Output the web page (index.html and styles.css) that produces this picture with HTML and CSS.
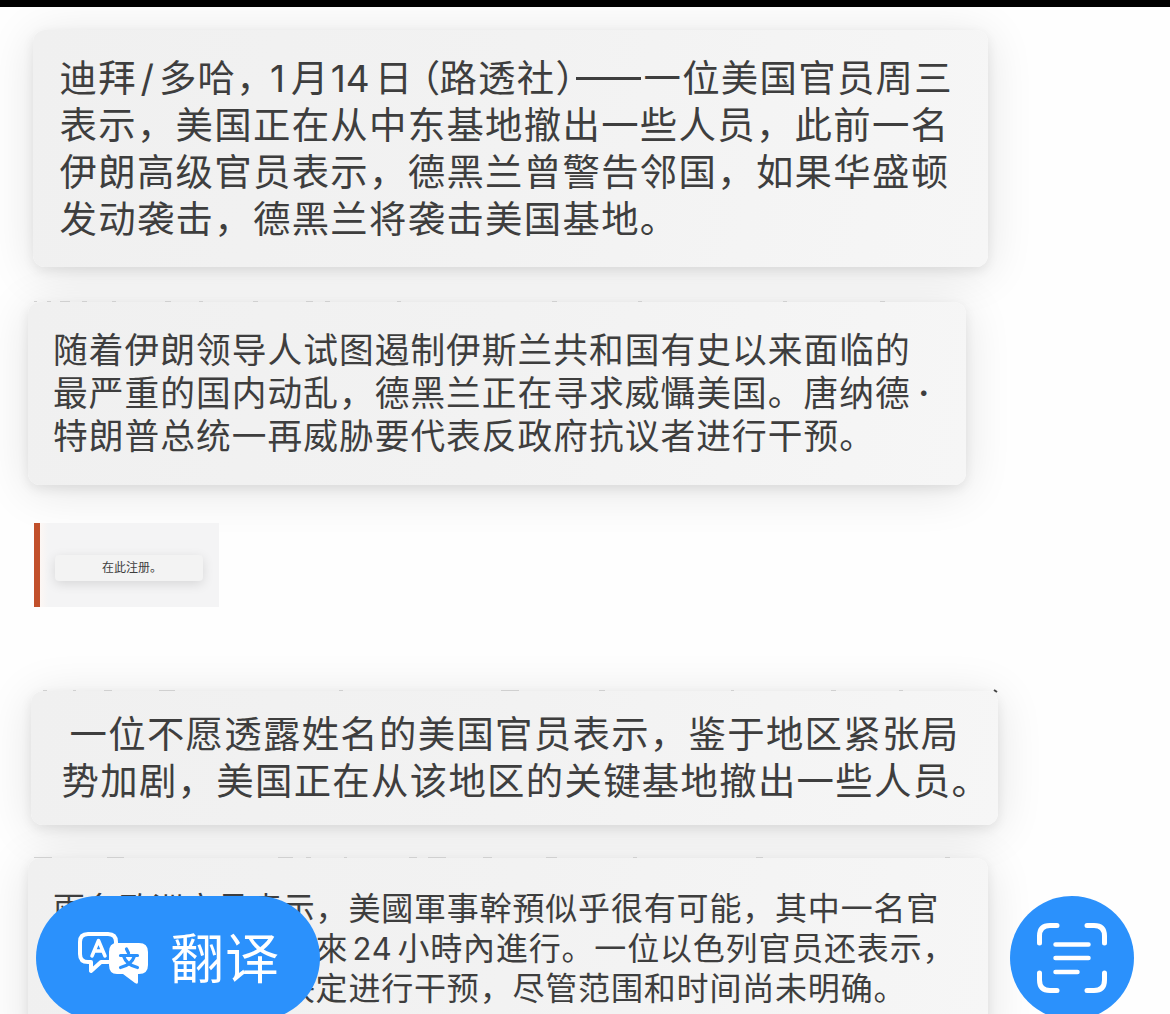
FILE: index.html
```html
<!doctype html>
<html lang="zh-CN">

<head>
  <meta charset="UTF-8">
  <title>翻译</title>
  <link rel="stylesheet" href="styles.css">
</head>

<body>
  <div class="status"></div>
  <main class="page">
    <p class="card c1">
      <span>迪拜<i class="slash">/</i>多哈，<i class="num one">1</i>月<i class="num">14</i>日<i class="open">（</i>路透社<i class="close">）</i><i class="dash"></i>一位美国官员周三</span>
      <span>表示，美国正在从中东基地撤出一些人员，此前一名</span>
      <span>伊朗高级官员表示，德黑兰曾警告邻国，如果华盛顿</span>
      <span>发动袭击，德黑兰将袭击美国基地。</span>
    </p>

    <p class="card c2">
      <svg class="traces" viewBox="0 0 967 3"><path d="M6 1.500h3M19 1.500h4M32 1.500h10M54 1.500h5M84 1.500h4M137 1.500h6M171 1.500h4M225 1.500h5M278 1.500h7M297 1.500h5M369 1.500h4M524 1.500h5M610 1.500h4M755 1.500h4M852 1.500h5" /></svg>
      <span>随着伊朗领导人试图遏制伊斯兰共和国有史以来面临的</span>
      <span>最严重的国内动乱，德黑兰正在寻求威懾美国。唐纳德<i class="dot">·</i></span>
      <span>特朗普总统一再威胁要代表反政府抗议者进行干预。</span>
    </p>

    <div class="quote">
      <p class="note">在此注册。</p>
    </div>

    <p class="card c3">
      <svg class="traces" viewBox="0 0 967 3"><path d="M12 1.500h4M42 1.500h3M73 1.500h8M128 1.500h16M308 1.500h4M470 1.500h18M568 1.500h6M700 1.500h3M800 1.500h5M868 1.500h4" /><path class="mark" d="M963 1l3 2" /></svg>
      <span class="first">一位不愿透露姓名的美国官员表示，鉴于地区紧张局</span>
      <span>势加剧，美国正在从该地区的关键基地撤出一些人员。</span>
    </p>

    <p class="card c4">
      <svg class="traces" viewBox="0 0 967 3"><path d="M6 1.500h18M79 1.500h17M250 1.500h15M278 1.500h5M316 1.500h3M381 1.500h8M400 1.500h18M455 1.500h9M518 1.500h11M605 1.500h4M728 1.500h7M917 1.500h5" /></svg>
      <span>兩名歐洲官員表示，美國軍事幹預似乎很有可能，其中一名官</span>
      <span>員表示，可能在未來<i class="hours">24</i>小時內進行。一位以色列官员还表示，</span>
      <span>特朗普似乎已经决定进行干预，尽管范围和时间尚未明确。</span>
    </p>
  </main>

  <div class="actions">
    <button class="translate">
      <svg class="bubbles" viewBox="0 0 72 52">
        <path class="line" d="M10 2h20q8 0 8 8v12q0 8-8 8H23L13 39V30H10q-8 0-8-8V10q0-8 8-8z" />
        <path class="letter" d="M14 24L20.500 8.500L27 24M16.500 19h8" />
        <path class="solid" d="M39 11h22q9 0 9 9v13q0 9-9 9h-1v8q0 3-3 1L45 42h-6q-8 0-8-9V20q0-9 8-9z" />
        <path class="glyph" d="M48.500 17l2 4M42.500 23.500h17M45.500 24q3 9 14 11.500M56.500 24q-3 9-14 11.500" />
      </svg>
      <span>翻译</span>
    </button>
    <button class="scan">
      <svg viewBox="0 0 70 70">
        <path class="frame" d="M2.500 20v-7q0-10.500 10.500-10.500h7M50 2.500h7q10.500 0 10.500 10.500v7M67.500 50v7q0 10.500-10.500 10.500h-7M20 67.500h-7q-10.500 0-10.500-10.500v-7" />
        <path class="rows" d="M18.500 21.500h33M18.500 35h33M18.500 49h22" />
      </svg>
    </button>
  </div>
</body>

</html>
```
FILE: styles.css
```css
html,
body {
  margin: 0;
  height: 100%;
  overflow: hidden;
}

body {
  display: flex;
  flex-direction: column;
  background: #fefefe;
  color: #3e3e3e;
  font-family: "Noto Sans CJK SC", sans-serif;
}

.status {
  position: relative;
  flex: none;
  height: 7px;
  background: #000;
}

.page {
  flex: none;
  padding-top: 23px;
}

.card {
  position: relative;
  box-sizing: border-box;
  margin: 0;
  border-radius: 12px;
  background: linear-gradient(100deg, #f0f0f0, #f2f2f2 50%, #f6f6f6);
}

/* Shadow sits below every card, so neighbours don't darken each other */
.card::before {
  content: "";
  position: absolute;
  inset: 0;
  z-index: -1;
  border-radius: inherit;
  box-shadow: 0 4px 12px rgba(0, 0, 0, 0.08), 0 6px 48px rgba(0, 0, 0, 0.11);
}

.card span {
  display: block;
  white-space: nowrap;
}

.card i {
  display: inline-block;
  font-style: normal;
}

/* Slivers of the covered text, along the top edge of a card */
.traces {
  position: absolute;
  left: 0;
  top: -2px;
  width: 967px;
  height: 3px;
  overflow: visible;
  fill: none;
  stroke: #d0d0d0;
  stroke-width: 1;
}

.traces .mark {
  stroke: #444;
  stroke-width: 2;
}

.c1 {
  width: 955px;
  height: 237px;
  margin-left: 33px;
  padding: 23px 0 0 26.500px;
  font-size: 37.400px;
  letter-spacing: 1.300px;
  line-height: 46.900px;
}

.c1 .slash {
  width: 22px;
  font-family: Inter, sans-serif;
  line-height: 40px;
  text-align: center;
}

.c1 .num {
  width: 45px;
  font-family: Inter, sans-serif;
  font-size: 37px;
  line-height: 40px;
  letter-spacing: 0;
  text-indent: 1px;
}

.c1 .one {
  width: 22px;
  margin-left: -6px;
}

.c1 .open,
.c1 .close {
  font-feature-settings: "halt";
}

.c1 .open {
  width: 18px;
  margin-left: 8px;
}

.c1 .close {
  width: 21px;
}

.c1 .dash {
  width: 65px;
  height: 3px;
  margin-right: 2px;
  background: #3e3e3e;
  vertical-align: 12px;
}

.c2 {
  width: 938px;
  height: 183px;
  margin: 35px 0 0 28px;
  padding: 25px 0 0 25px;
  font-size: 34.700px;
  letter-spacing: 1.050px;
  line-height: 43.200px;
}

.c2 .dot {
  width: 20px;
  font-size: 26px;
  line-height: 30px;
  vertical-align: 3px;
}

.quote {
  box-sizing: border-box;
  width: 185px;
  height: 84px;
  margin: 38px 0 0 34px;
  padding: 32px 0 0 15px;
  border-left: 6px solid #c1502b;
  background: linear-gradient(90deg, #fdf7f4 0, #f4f4f5 8px);
}

.note {
  width: 148px;
  height: 26px;
  margin: 0;
  border-radius: 4px;
  background: #f3f3f3;
  box-shadow: 0 3px 12px rgba(0, 0, 0, 0.12);
  font-size: 12px;
  line-height: 24px;
  text-indent: 47px;
}

.c3 {
  width: 967px;
  height: 134px;
  margin: 84px 0 0 31px;
  padding: 18px 0 0 30.500px;
  font-size: 37.400px;
  letter-spacing: 1.300px;
  line-height: 47px;
}

.c3 .first {
  padding-left: 8px;
}

.c4 {
  width: 960px;
  height: 190px;
  margin: 33px 0 0 28px;
  padding: 28px 0 0 25px;
  font-size: 32px;
  letter-spacing: 0.820px;
  line-height: 40px;
}

.c4 .hours {
  width: 45px;
  margin-left: 4px;
  font-family: Inter, sans-serif;
  font-size: 31px;
  line-height: 32px;
}

.actions {
  position: fixed;
  left: 36px;
  right: 36px;
  top: 896px;
  display: flex;
  justify-content: space-between;
}

.actions button {
  display: flex;
  align-items: center;
  height: 124px;
  padding: 0;
  border: 0;
  border-radius: 62px;
  background: #2b91fc;
  color: #fff;
  font: 54px/80px "Noto Sans CJK SC", sans-serif;
}

.actions .translate {
  width: 284px;
  gap: 20px;
  padding-left: 42px;
}

.translate span {
  padding-bottom: 5px;
  letter-spacing: 1px;
}

.actions .scan {
  justify-content: center;
  width: 124px;
}

.actions svg {
  fill: none;
  stroke: #fff;
  stroke-linecap: round;
  stroke-linejoin: round;
}

.bubbles {
  width: 72px;
  height: 52px;
}

.bubbles .line {
  stroke-width: 4;
}

.bubbles .letter {
  stroke-width: 3.500;
}

.bubbles .solid {
  fill: #fff;
  stroke: none;
}

.bubbles .glyph {
  stroke: #2b91fc;
  stroke-width: 3.200;
}

.scan svg {
  width: 70px;
  height: 70px;
}

.scan .frame {
  stroke-width: 5;
}

.scan .rows {
  stroke-width: 4.500;
}
```
